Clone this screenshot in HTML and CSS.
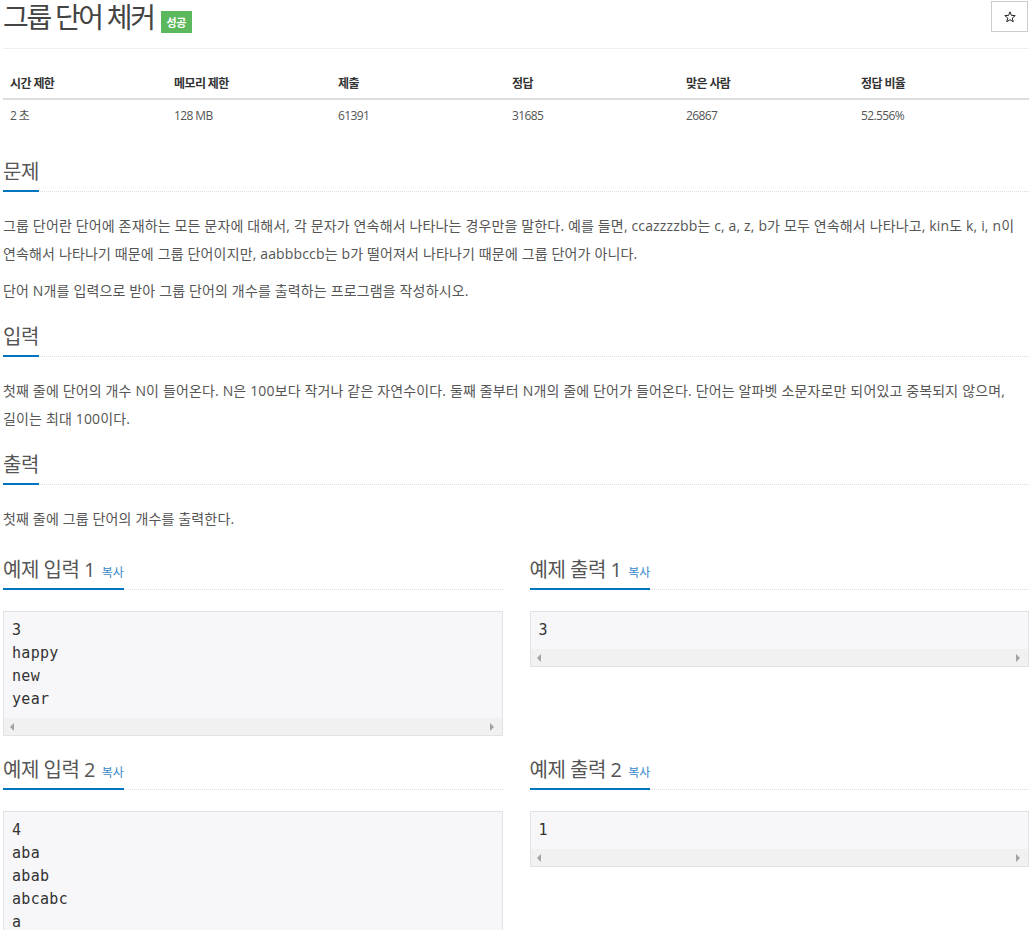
FILE: index.html
```html
<!DOCTYPE html>
<html lang="ko">
<head>
<meta charset="utf-8">
<title>그룹 단어 체커</title>
<link rel="stylesheet" href="styles.css">
</head>
<body>
<div class="page">
  <div class="page-header">
    <h1 class="title"><span class="title-text">그룹 단어 체커</span><span class="badge">성공</span></h1>
    <button class="star-btn" type="button" aria-label="즐겨찾기">
      <svg width="12" height="12" viewBox="0 0 12 12"><polygon points="6,0.8 7.41,4.36 11.23,4.6 8.28,7.04 9.23,10.75 6,8.7 2.77,10.75 3.72,7.04 0.77,4.6 4.59,4.36" fill="none" stroke="#222" stroke-width="1" stroke-linejoin="round"/></svg>
    </button>
  </div>

  <table class="info">
    <colgroup>
      <col class="c1"><col class="c2"><col class="c3"><col class="c4"><col class="c5"><col class="c6">
    </colgroup>
    <thead>
      <tr><th>시간 제한</th><th>메모리 제한</th><th>제출</th><th>정답</th><th>맞은 사람</th><th>정답 비율</th></tr>
    </thead>
    <tbody>
      <tr><td>2 초</td><td>128 MB</td><td>61391</td><td>31685</td><td>26867</td><td>52.556%</td></tr>
    </tbody>
  </table>

  <section class="sec sec-first">
    <h2 class="headline"><span class="hl">문제</span></h2>
    <div class="text">
      <p>그룹 단어란 단어에 존재하는 모든 문자에 대해서, 각 문자가 연속해서 나타나는 경우만을 말한다. 예를 들면, ccazzzzbb는 c, a, z, b가 모두 연속해서 나타나고, kin도 k, i, n이 연속해서 나타나기 때문에 그룹 단어이지만, aabbbccb는 b가 떨어져서 나타나기 때문에 그룹 단어가 아니다.</p>
      <p>단어 N개를 입력으로 받아 그룹 단어의 개수를 출력하는 프로그램을 작성하시오.</p>
    </div>
  </section>

  <section class="sec">
    <h2 class="headline"><span class="hl">입력</span></h2>
    <div class="text">
      <p>첫째 줄에 단어의 개수 N이 들어온다. N은 100보다 작거나 같은 자연수이다. 둘째 줄부터 N개의 줄에 단어가 들어온다. 단어는 알파벳 소문자로만 되어있고 중복되지 않으며, 길이는 최대 100이다.</p>
    </div>
  </section>

  <section class="sec">
    <h2 class="headline"><span class="hl">출력</span></h2>
    <div class="text">
      <p>첫째 줄에 그룹 단어의 개수를 출력한다.</p>
    </div>
  </section>

  <div class="samples">
    <section class="sample">
      <h2 class="headline"><span class="hl">예제 입력 1 <a class="copy">복사</a></span></h2>
      <div class="pre-box">
        <pre>3
happy
new
year</pre>
        <div class="hscroll"><i class="arr arr-l"></i><i class="arr arr-r"></i></div>
      </div>
    </section>
    <section class="sample">
      <h2 class="headline"><span class="hl">예제 출력 1 <a class="copy">복사</a></span></h2>
      <div class="pre-box">
        <pre>3</pre>
        <div class="hscroll"><i class="arr arr-l"></i><i class="arr arr-r"></i></div>
      </div>
    </section>
    <section class="sample">
      <h2 class="headline"><span class="hl">예제 입력 2 <a class="copy">복사</a></span></h2>
      <div class="pre-box">
        <pre>4
aba
abab
abcabc
a</pre>
        <div class="hscroll"><i class="arr arr-l"></i><i class="arr arr-r"></i></div>
      </div>
    </section>
    <section class="sample">
      <h2 class="headline"><span class="hl">예제 출력 2 <a class="copy">복사</a></span></h2>
      <div class="pre-box">
        <pre>1</pre>
        <div class="hscroll"><i class="arr arr-l"></i><i class="arr arr-r"></i></div>
      </div>
    </section>
  </div>
</div>
</body>
</html>
```

FILE: styles.css
```css
* { box-sizing: border-box; }

body {
  margin: 0;
  background: #fff;
  color: #555;
  font-family: "Open Sans", "Noto Sans CJK KR", sans-serif;
  font-size: 14px;
}

.page {
  padding-left: 3px;
  padding-bottom: 40px;
}

/* header */
.page-header {
  display: flex;
  justify-content: space-between;
  align-items: flex-start;
  height: 49px;
  border-bottom: 1px solid #eee;
}

.title {
  display: flex;
  align-items: flex-start;
  margin: 0;
  font-weight: normal;
}

.title-text {
  font-size: 28px;
  line-height: 34px;
  letter-spacing: -2.3px;
  color: #444;
}

.badge {
  margin-top: 11px;
  margin-left: 7px;
  width: 31px;
  height: 22px;
  display: flex;
  align-items: center;
  justify-content: center;
  background: #5cb85c;
  color: #fff;
  font-size: 11px;
  font-weight: bold;
  letter-spacing: -0.5px;
}

.star-btn {
  margin-top: 1px;
  margin-right: 1px;
  width: 37px;
  height: 31px;
  padding: 0;
  display: flex;
  align-items: center;
  justify-content: center;
  background: #fff;
  border: 1px solid #ccc;
  border-radius: 0;
}

/* info table */
.info {
  width: 100%;
  margin-top: 17px;
  border-collapse: collapse;
  table-layout: fixed;
  font-size: 12px;
  letter-spacing: -0.6px;
}
.c1, .c2 { width: 164px; }
.c3, .c4 { width: 174px; }
.c5, .c6 { width: 175px; }

.info th, .info td {
  padding: 8px 7px;
  line-height: 16px;
  text-align: left;
}
.info th {
  color: #333;
  font-weight: bold;
  padding-top: 10px;
  padding-bottom: 6px;
  border-bottom: 2px solid #ddd;
}
.info td { color: #555; }

/* sections */
.sec { margin-top: 18px; }
.sec-first { margin-top: 26px; }

.headline {
  display: flex;
  margin: 0;
  font-size: 20px;
  line-height: 28px;
  font-weight: normal;
  letter-spacing: -0.5px;
  color: #555;
  border-bottom: 1px dotted #ddd;
}

.hl {
  display: block;
  height: 34px;
  padding-bottom: 4px;
  margin-bottom: -1px;
  border-bottom: 2px solid #0076c0;
  white-space: nowrap;
}

.copy {
  font-size: 12px;
  line-height: 1;
  letter-spacing: 0;
  color: #3a86c8;
  margin-left: 2px;
}

.text { margin-top: 20px; }
.text p {
  margin: 0 0 9px;
  line-height: 28px;
  letter-spacing: 0.15px;
  word-break: keep-all;
}

/* samples */
.samples {
  margin-top: 23px;
  display: grid;
  grid-template-columns: 1fr 1fr;
  column-gap: 27px;
  row-gap: 20px;
  align-items: start;
}

.pre-box {
  margin-top: 21px;
  background: #f7f7f9;
  border: 1px solid #e1e1e8;
}

.pre-box pre {
  margin: 0;
  padding: 7px 8px 7px;
  font-family: "DejaVu Sans Mono", monospace;
  font-size: 15px;
  line-height: 23px;
  letter-spacing: 0.3px;
  color: #333;
}

.hscroll {
  height: 17px;
  background: #f1f1f1;
  display: flex;
  align-items: center;
  justify-content: space-between;
  padding: 0 8px 0 6px;
}

.arr {
  width: 0;
  height: 0;
  border-top: 4px solid transparent;
  border-bottom: 4px solid transparent;
}
.arr-l { border-right: 4px solid #a3a3a3; }
.arr-r { border-left: 4px solid #a3a3a3; }
```
